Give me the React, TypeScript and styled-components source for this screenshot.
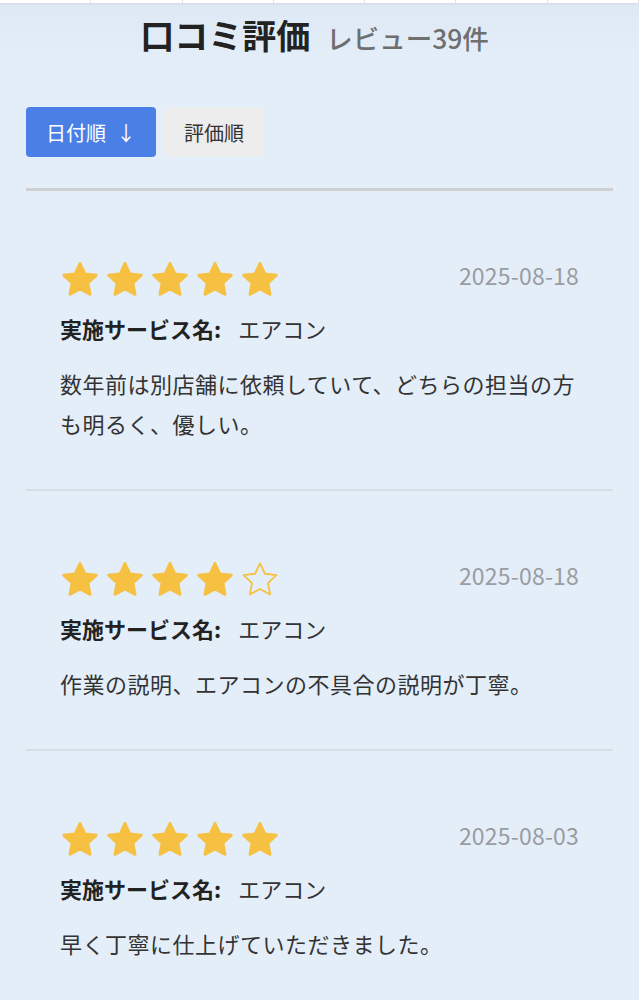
import React from "react";
import styled, { createGlobalStyle } from "styled-components";

const GlobalStyle = createGlobalStyle`
  html, body {
    margin: 0;
    padding: 0;
    background: #e4eef9;
  }
  body {
    font-family: "Noto Sans CJK JP", "Noto Sans", sans-serif;
    color: #333;
  }
`;

const Page = styled.div`
  min-height: 1000px;
  background: linear-gradient(180deg, #dde8f4 0px, #e4eef9 60px);
`;

const TopStrip = styled.div`
  display: flex;
  height: 3px;
  background: #ffffff;
  box-shadow: 0 1px 3px rgba(0, 0, 0, 0.06);
`;

const TopCell = styled.div`
  width: 95px;
  border-right: 1px solid #e3e3e3;
`;

const Header = styled.div`
  display: flex;
  justify-content: center;
  align-items: baseline;
  gap: 16px;
  padding: 9px 10px 0 0;
  height: 50px;
`;

const Title = styled.h1`
  margin: 0;
  font-size: 34px;
  font-weight: 700;
  color: #222;
  line-height: 46px;
`;

const Count = styled.span`
  font-size: 26.5px;
  font-weight: 500;
  color: #6f6f6f;
`;

const Section = styled.div`
  padding: 0 26px;
`;

const SortBar = styled.div`
  display: flex;
  gap: 8px;
  margin-top: 45px;
  padding-bottom: 31px;
  border-bottom: 3px solid #cfcfd2;
`;

const SortButton = styled.button<{ $active?: boolean }>`
  height: 50px;
  width: ${(p) => (p.$active ? "130px" : "100px")};
  padding: 0;
  border: none;
  border-radius: 4px;
  background: ${(p) => (p.$active ? "#4a7fe5" : "#ededed")};
  color: ${(p) => (p.$active ? "#ffffff" : "#333")};
  font-family: "Noto Sans CJK JP", sans-serif;
  font-size: 20px;
  font-weight: 400;
  display: flex;
  align-items: center;
  justify-content: center;
  gap: 10px;
`;

const Review = styled.div`
  padding: 70px 34px 46px;
  border-bottom: 2px solid #d9dee4;
`;

const TopRow = styled.div`
  display: flex;
  justify-content: space-between;
  align-items: center;
  height: 36px;
`;

const Stars = styled.div`
  display: flex;
  gap: 9px;
  margin-left: 2px;
`;

const DateText = styled.span`
  font-size: 23px;
  color: #9a9ca2;
  margin-bottom: 9px;
  letter-spacing: 0.2px;
`;

const ServiceLine = styled.div`
  margin-top: 16px;
  font-size: 22px;
  line-height: 30px;
  color: #333;
`;

const ServiceLabel = styled.span`
  font-weight: 700;
  color: #222;
  margin-right: 17px;
`;

const Body = styled.p`
  margin: 20px 0 0;
  font-size: 22px;
  line-height: 40px;
  color: #333;
  letter-spacing: 0.5px;
`;

const STAR = "M12 2.6l2.75 5.8 6.35.8-4.66 4.4 1.2 6.3L12 16.85 6.36 19.9l1.2-6.3L2.9 9.2l6.35-.8z";

const Star: React.FC<{ filled: boolean }> = ({ filled }) => (
  <svg width="36" height="35" viewBox="2 1.9 20 19.4">
    <path
      d={STAR}
      fill={filled ? "#f6c142" : "none"}
      stroke="#f6c142"
      strokeWidth={filled ? 1.5 : 1}
      strokeLinejoin="round"
    />
  </svg>
);

const reviews = [
  {
    rating: 5,
    date: "2025-08-18",
    service: "エアコン",
    text: "数年前は別店舗に依頼していて、どちらの担当の方も明るく、優しい。",
  },
  {
    rating: 4,
    date: "2025-08-18",
    service: "エアコン",
    text: "作業の説明、エアコンの不具合の説明が丁寧。",
  },
  {
    rating: 5,
    date: "2025-08-03",
    service: "エアコン",
    text: "早く丁寧に仕上げていただきました。",
  },
];

export default function App() {
  return (
    <>
      <GlobalStyle />
      <Page>
        <TopStrip>
          {Array.from({ length: 7 }).map((_, i) => (
            <TopCell key={i} />
          ))}
        </TopStrip>
        <Header>
          <Title>口コミ評価</Title>
          <Count>レビュー39件</Count>
        </Header>
        <Section>
          <SortBar>
            <SortButton $active>
              <span>日付順</span>
              <span>↓</span>
            </SortButton>
            <SortButton>評価順</SortButton>
          </SortBar>
          {reviews.map((r, i) => (
            <Review key={i}>
              <TopRow>
                <Stars>
                  {[0, 1, 2, 3, 4].map((s) => (
                    <Star key={s} filled={s < r.rating} />
                  ))}
                </Stars>
                <DateText>{r.date}</DateText>
              </TopRow>
              <ServiceLine>
                <ServiceLabel>実施サービス名:</ServiceLabel>
                {r.service}
              </ServiceLine>
              <Body>{r.text}</Body>
            </Review>
          ))}
        </Section>
      </Page>
    </>
  );
}
